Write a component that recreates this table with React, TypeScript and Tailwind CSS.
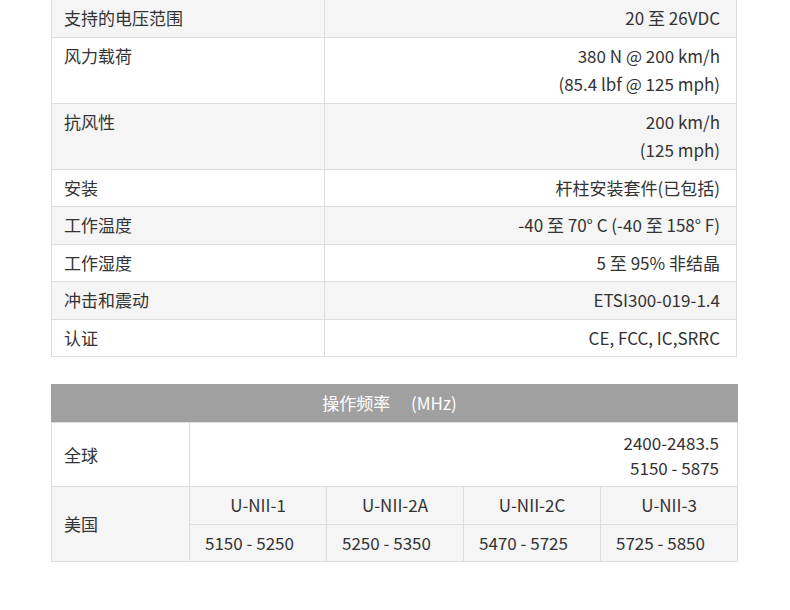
import React from 'react';

const specs: { label: string; value: string[] }[] = [
  { label: '支持的电压范围', value: ['20 至 26VDC'] },
  { label: '风力载荷', value: ['380 N @ 200 km/h', '(85.4 lbf @ 125 mph)'] },
  { label: '抗风性', value: ['200 km/h', '(125 mph)'] },
  { label: '安装', value: ['杆柱安装套件(已包括)'] },
  { label: '工作温度', value: ['-40 至 70° C (-40 至 158° F)'] },
  { label: '工作湿度', value: ['5 至 95% 非结晶'] },
  { label: '冲击和震动', value: ['ETSI300-019-1.4'] },
  { label: '认证', value: ['CE, FCC, IC,SRRC'] },
];

const bands = [
  { name: 'U-NII-1', range: '5150 - 5250' },
  { name: 'U-NII-2A', range: '5250 - 5350' },
  { name: 'U-NII-2C', range: '5470 - 5725' },
  { name: 'U-NII-3', range: '5725 - 5850' },
];

const cell = 'border border-[#dddddd]';

const App: React.FC = () => {
  return (
    <div
      className="min-h-[610px] bg-white text-[#333333] text-[17px] pl-[51px] -mt-px"
      style={{ fontFamily: '"Noto Sans CJK SC", "Noto Sans", sans-serif' }}
    >
      {/* Spec table */}
      <table className="w-[686px] table-fixed border-collapse">
        <colgroup>
          <col className="w-[273px]" />
          <col />
        </colgroup>
        <tbody>
          {specs.map((row, i) => (
            <tr key={row.label} className={i % 2 === 0 ? 'bg-[#f5f5f5]' : 'bg-white'}>
              <td className={`${cell} align-top px-3 py-1 leading-[28.5px]`}>{row.label}</td>
              <td className={`${cell} align-top pl-3 pr-4 py-1 leading-[28.5px] text-right`}>
                {row.value.map((v) => (
                  <div key={v}>{v}</div>
                ))}
              </td>
            </tr>
          ))}
        </tbody>
      </table>

      {/* Operating frequency table */}
      <table className="w-[686px] table-fixed border-collapse mt-[27px]">
        <colgroup>
          <col className="w-[138px]" />
          <col className="w-[137px]" />
          <col className="w-[137px]" />
          <col className="w-[137px]" />
          <col className="w-[137px]" />
        </colgroup>
        <tbody>
          <tr className="bg-[#a0a0a0] text-white">
            <td
              colSpan={5}
              className="border border-[#a0a0a0] border-b-[#dddddd] h-[38px] pr-[10px] text-center leading-[28.5px]"
            >
              操作频率 　(MHz)
            </td>
          </tr>
          <tr className="bg-white">
            <td className={`${cell} align-middle px-3`}>全球</td>
            <td colSpan={4} className={`${cell} align-top pr-[18px] pt-[7px] pb-[6px] text-right leading-[25px]`}>
              <div>2400-2483.5</div>
              <div>5150 - 5875</div>
            </td>
          </tr>
          <tr className="bg-[#f5f5f5]">
            <td rowSpan={2} className={`${cell} align-middle px-3`}>美国</td>
            {bands.map((b) => (
              <td key={b.name} className={`${cell} py-1 text-center leading-[28.5px]`}>
                {b.name}
              </td>
            ))}
          </tr>
          <tr className="bg-[#f5f5f5]">
            {bands.map((b) => (
              <td key={b.range} className={`${cell} pl-[15px] py-1 leading-[28.5px]`}>
                {b.range}
              </td>
            ))}
          </tr>
        </tbody>
      </table>
    </div>
  );
};

export default App;
